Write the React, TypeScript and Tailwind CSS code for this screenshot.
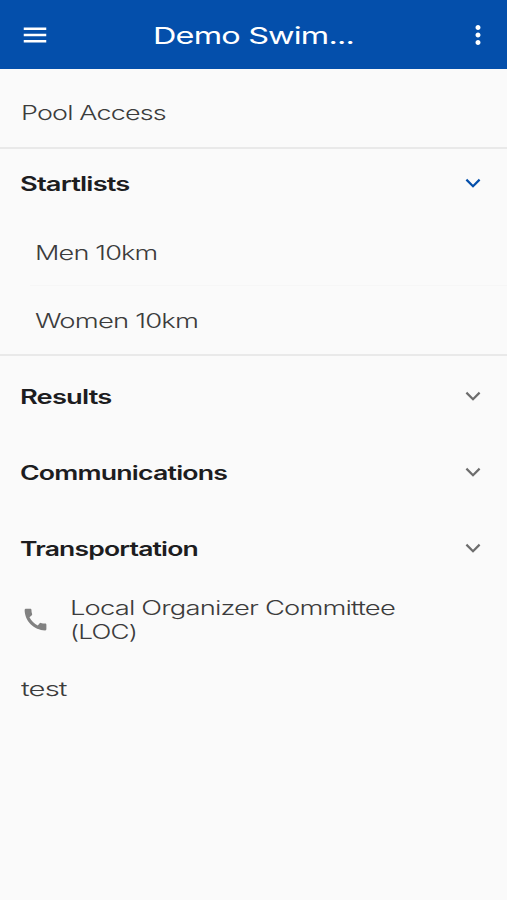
import { useState } from "react";
import { MdCall, MdMenu, MdMoreVert } from "react-icons/md";
import { clsx } from "clsx";

interface Section {
  title: string;
  stretch: string;
  items?: { label: string; stretch: string }[];
}

const startlists: Section = {
  title: "Startlists",
  stretch: "scale-x-[1.4]",
  items: [
    { label: "Men 10km", stretch: "scale-x-[1.39]" },
    { label: "Women 10km", stretch: "scale-x-[1.41]" }
  ]
};

const sections: Section[] = [
  { title: "Results", stretch: "scale-x-[1.4]" },
  { title: "Communications", stretch: "scale-x-[1.37]" },
  { title: "Transportation", stretch: "scale-x-[1.36]" }
];

function Wide({ children, className }: { children: string; className: string }) {
  return <span className={clsx("inline-block origin-left whitespace-nowrap tracking-[-0.6px]", className)}>{children}</span>;
}

function Chevron({ className }: { className: string }) {
  return (
    <svg className={clsx("mb-[3px] w-4 h-4 shrink-0", className)} viewBox="0 0 16 16" fill="none" stroke="currentColor" strokeWidth={2.2}>
      <path d="M1.4 4.6L8 11.2L14.6 4.6" />
    </svg>
  );
}

function SectionHeader({ section, open, onClick, className }: { section: Section; open?: boolean; onClick?: () => void; className: string }) {
  return (
    <button onClick={onClick} className={clsx("flex w-full items-center justify-between pl-[20px] pr-[26px] font-semibold text-[#1d1d1f]", className)}>
      <Wide className={section.stretch}>{section.title}</Wide>
      <Chevron className={open ? "text-[#044fab]" : "text-[#6d6d6d]"} />
    </button>
  );
}

export default function App() {
  const [open, setOpen] = useState(true);

  return (
    <div className="flex min-h-[900px] w-full flex-col bg-[#fafafa] font-['Inter',sans-serif] text-[19.5px] leading-6 text-[#3c3c3c]">
      <header className="flex h-[69px] items-center bg-[#044fab] text-white">
        <button className="ml-[20px]" aria-label="Menu">
          <MdMenu className="h-[30px] w-[30px]" />
        </button>
        <h1 className="ml-[103px] flex-1 pt-0.5 text-[23.5px] leading-8">
          <Wide className="scale-x-[1.38]">Demo Swim...</Wide>
        </h1>
        <button className="mr-[14px]" aria-label="More">
          <MdMoreVert className="h-[30px] w-[30px]" />
        </button>
      </header>

      <nav className="flex flex-col">
        <div className="flex h-[80px] items-center border-b-2 border-[#e9e9e9] pl-[21px] pt-[9px] font-light">
          <Wide className="scale-x-[1.38]">Pool Access</Wide>
        </div>

        <div className="border-b-2 border-[#e9e9e9]">
          <SectionHeader section={startlists} open={open} onClick={() => setOpen(!open)} className="h-[69px] pt-px" />
          {open && (
            <ul className="ml-[30px] divide-y divide-[#f6f6f6] font-light">
              {startlists.items?.map((item) => (
                <li key={item.label} className="flex h-[68px] items-center pl-[5px] pt-0.5">
                  <Wide className={item.stretch}>{item.label}</Wide>
                </li>
              ))}
            </ul>
          )}
        </div>

        <div className="pt-[3px]">
          {sections.map((section) => (
            <SectionHeader key={section.title} section={section} className="h-[76px]" />
          ))}
        </div>

        <a className="flex h-[66px] items-center pl-[20.5px] font-light">
          <MdCall className="mb-0.5 mr-[20px] h-[29px] w-[29px] text-[#818181]" />
          <span className="flex flex-col">
            <Wide className="scale-x-[1.404]">Local Organizer Committee</Wide>
            <Wide className="scale-x-[1.34]">(LOC)</Wide>
          </span>
        </a>
        <div className="flex h-[72px] items-center pl-[20.5px] font-light">
          <Wide className="scale-x-[1.5]">test</Wide>
        </div>
      </nav>
    </div>
  );
}
